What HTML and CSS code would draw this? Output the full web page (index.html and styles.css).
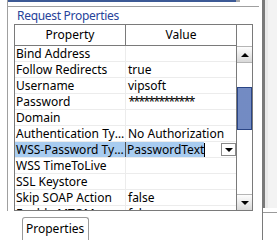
FILE: index.html
```html
<!DOCTYPE html>
<html lang="en">
<head>
  <meta charset="UTF-8">
  <title>Request Properties</title>
  <link rel="stylesheet" href="styles.css">
</head>
<body>
  <div class="main">
    <div class="upper">
      <div class="topstrip"></div>
      <div class="rule"></div>
      <div class="title">Request Properties</div>
      <div class="grid">
        <div class="table">
          <div class="row head">
            <div class="cell name">Property</div>
            <div class="cell value">Value</div>
          </div>
          <div class="row"><div class="cell name">Bind Address</div><div class="cell value"></div></div>
          <div class="row"><div class="cell name">Follow Redirects</div><div class="cell value">true</div></div>
          <div class="row"><div class="cell name">Username</div><div class="cell value">vipsoft</div></div>
          <div class="row"><div class="cell name">Password</div><div class="cell value stars">*************</div></div>
          <div class="row"><div class="cell name">Domain</div><div class="cell value"></div></div>
          <div class="row"><div class="cell name">Authentication Type</div><div class="cell value">No Authorization</div></div>
          <div class="row selected">
            <div class="cell name">WSS-Password Type</div>
            <div class="cell value combo">
              <span class="combo-text">PasswordText</span><span class="caret"></span>
              <span class="combo-btn"><span class="tri-down"></span></span>
            </div>
          </div>
          <div class="row"><div class="cell name">WSS TimeToLive</div><div class="cell value"></div></div>
          <div class="row"><div class="cell name">SSL Keystore</div><div class="cell value"></div></div>
          <div class="row"><div class="cell name">Skip SOAP Action</div><div class="cell value">false</div></div>
          <div class="row"><div class="cell name">Enable MTOM</div><div class="cell value">false</div></div>
        </div>
        <div class="scroll">
          <div class="scroll-head"></div>
          <div class="scroll-btn"><span class="tri-up"></span></div>
          <div class="track">
            <div class="thumb"></div>
          </div>
          <div class="scroll-btn"><span class="tri-down"></span></div>
        </div>
      </div>
    </div>
    <div class="tabs">
      <div class="tab">Properties</div>
    </div>
  </div>
  <div class="side">
    <div class="side-top"></div>
    <div class="side-bottom"><div class="side-line"></div></div>
  </div>
</body>
</html>
```

FILE: styles.css
```css
body {
  margin: 0;
  width: 277px;
  height: 240px;
  overflow: hidden;
  display: flex;
  background: #fff;
  font-family: "Noto Sans", "Open Sans", sans-serif;
  font-size: 12px;
  color: #000;
}
.main {
  width: 262px;
  flex: none;
}
.upper {
  margin-left: 7px;
  border-left: 1px solid #a0a0a0;
  width: 251px;
  height: 211px;
}
.topstrip {
  height: 2px;
  width: 232px;
  background: linear-gradient(to right, #3d5a96 228px, #a8a8a8 228px);
}
.rule {
  margin-top: 4px;
  height: 1px;
  background: #a0a0a0;
}
.title {
  height: 17px;
  line-height: 17px;
  padding-left: 9px;
  color: #27439a;
  letter-spacing: -0.3px;
}
.grid {
  margin-left: 6px;
  width: 239px;
  height: 187px;
  box-sizing: border-box;
  border: 1px solid #7a7a7a;
  display: flex;
  overflow: hidden;
}
.table {
  width: 221px;
  flex: none;
  overflow: hidden;
}
.row {
  display: flex;
  height: 15px;
  border-bottom: 1px solid #ececec;
  line-height: 15px;
}
.row.head {
  height: 20px;
  line-height: 20px;
  border-bottom: 1px solid #7a7a7a;
}
.cell {
  white-space: nowrap;
  overflow: hidden;
  text-overflow: ellipsis;
}
.name {
  width: 109px;
  padding-left: 1px;
  border-right: 1px solid #ececec;
}
.value {
  width: 108px;
  padding-left: 2px;
}
.head .cell {
  text-align: center;
  padding: 0;
  border-right: 1px solid #7a7a7a;
}
.head .name {
  width: 110px;
}
.head .value {
  width: 110px;
  border-right: none;
}
.stars {
  letter-spacing: -1.6px;
  padding-left: 3px;
}
.selected .name {
  background: #a8ccf0;
}
.combo {
  display: flex;
  align-items: center;
  padding-left: 0;
  width: 110px;
  border-left: 1px solid #505050;
  margin-left: -1px;
}
.combo-text {
  background: #a8ccf0;
  padding-left: 1px;
}
.caret {
  width: 1px;
  height: 14px;
  background: #000;
}
.combo-btn {
  margin-left: auto;
  width: 15px;
  height: 13px;
  border: 1px solid #8a8a8a;
  box-sizing: border-box;
  background: #fff;
  display: flex;
  align-items: center;
  justify-content: center;
}
.scroll {
  width: 15px;
  border-left: 1px solid #7a7a7a;
  display: flex;
  flex-direction: column;
}
.scroll-head {
  height: 21px;
}
.scroll-btn {
  height: 16px;
  box-sizing: border-box;
  border-top: 1px solid #b5b5b5;
  background: linear-gradient(#fdfdfd, #d9d9d9);
  display: flex;
  align-items: center;
  justify-content: center;
}
.track {
  flex: 1;
  background: #fff;
  border-top: 1px solid #b5b5b5;
  padding-top: 24px;
}
.thumb {
  height: 43px;
  box-sizing: border-box;
  border: 1px solid #2a4585;
  background-color: #4c69ab;
  background-image: radial-gradient(circle, #9fb3de 0.6px, transparent 0.8px);
  background-size: 2px 2px;
  background-position: 1px 1px;
}
.tri-up {
  width: 0;
  height: 0;
  border-left: 4px solid transparent;
  border-right: 4px solid transparent;
  border-bottom: 4px solid #000;
}
.tri-down {
  width: 0;
  height: 0;
  border-left: 4px solid transparent;
  border-right: 4px solid transparent;
  border-top: 4px solid #000;
}
.tabs {
  padding-top: 6px;
  padding-left: 22px;
}
.tab {
  display: inline-block;
  border: 1px solid #9a9a9a;
  border-bottom: none;
  border-radius: 3px 3px 0 0;
  padding: 3px 4px 6px 3px;
  line-height: 16px;
}
.side {
  flex: 1;
  display: flex;
  flex-direction: column;
}
.side-top {
  height: 208px;
  border-left: 3px solid #7a7a7a;
  background: linear-gradient(to right, #e9e9e9 3px, #f3f3f3 3px);
}
.side-bottom {
  flex: 1;
  border-left: 1px solid #7a7a7a;
}
.side-line {
  margin-top: 4px;
  height: 1px;
  background: #9a9a9a;
}
```
